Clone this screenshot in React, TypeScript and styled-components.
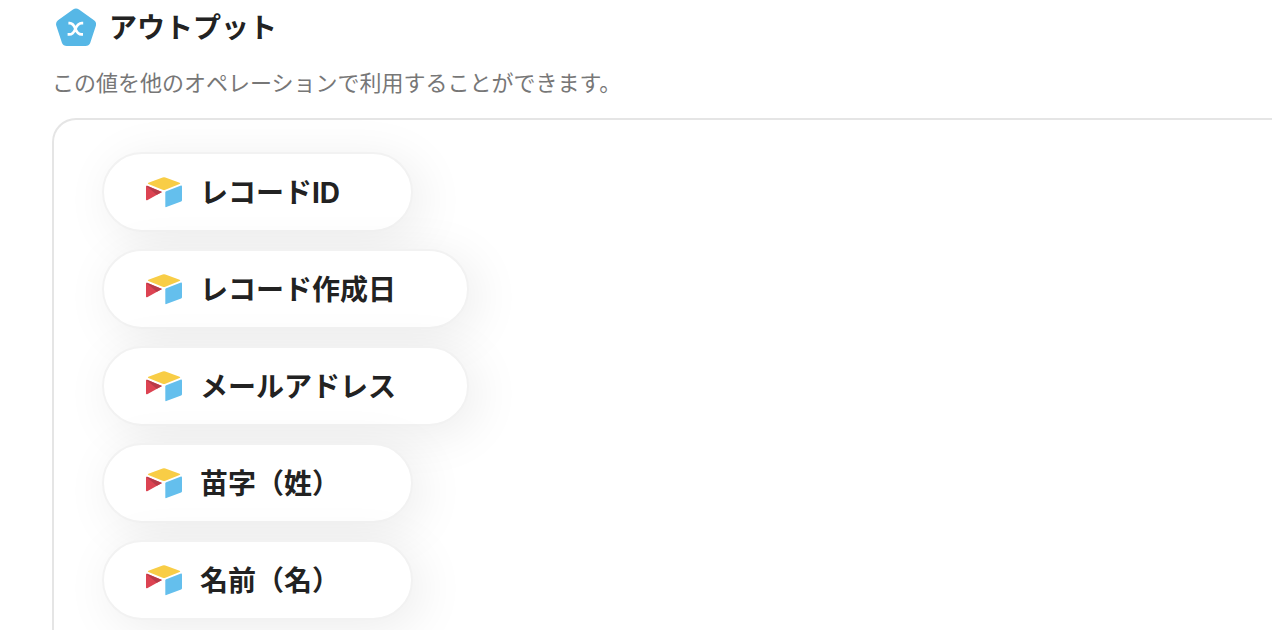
import React from "react";
import styled, { createGlobalStyle } from "styled-components";

const GlobalStyle = createGlobalStyle`
  *, *::before, *::after {
    box-sizing: border-box;
  }
  body {
    margin: 0;
    background: #ffffff;
    color: #222222;
    font-family: Inter, "Noto Sans CJK JP", sans-serif;
  }
`;

const Page = styled.main`
  display: flex;
  flex-direction: column;
  min-height: 100vh;
  padding-left: 52px;
  overflow: hidden;
`;

const Header = styled.header`
  display: flex;
  align-items: center;
  gap: 13px;
  height: 52px;
  padding: 2px 0 0 4px;
`;

const Title = styled.h1`
  margin: 0;
  padding-top: 2px;
  font-size: 28px;
  line-height: 40px;
  font-weight: 700;
`;

const Description = styled.p`
  margin: 15px 0 19px;
  font-size: 22px;
  line-height: 32px;
  color: #777777;
`;

const Panel = styled.section`
  flex: 1;
  padding: 32px 48px 12px;
  border: 2px solid #e5e5e5;
  border-width: 2px 0 0 2px;
  border-top-left-radius: 24px;
`;

const OutputList = styled.ul`
  display: flex;
  flex-direction: column;
  align-items: flex-start;
  gap: 17px;
  margin: 0;
  padding: 0;
  list-style: none;
`;

const Pill = styled.li`
  display: flex;
  align-items: center;
  gap: 16px;
  height: 80px;
  padding: 0 71px 0 40px;
  border: 2px solid #f2f2f2;
  border-radius: 40px;
  background: #ffffff;
  box-shadow: 8px 8px 50px rgba(0, 0, 0, 0.08);
`;

const PillLabel = styled.span`
  padding-top: 2px;
  font-size: 28px;
  line-height: 40px;
  font-weight: 700;
`;

const OutputIcon = () => (
  <svg width="40" height="40" viewBox="0 -1 40 40" aria-hidden="true">
    <path
      d="M17 1.6 Q20 -.6 23 1.6 L38 12.2 Q41 14.4 39.8 18 L34.2 35 Q33 38 29.4 38 H10.8 Q7.2 38 6 35 L.4 18 Q-.8 14.4 2 12.2 Z"
      fill="#56b7e6"
    />
    <path
      d="M12.4 15.2 H13.6 C20.8 15.2 17.8 26.4 25.6 26.4 H27 M27.2 15.2 H25.8 C18 15.2 20.8 26.4 13.4 26.4 H11.6"
      fill="none"
      stroke="#ffffff"
      strokeWidth="2.7"
    />
  </svg>
);

const TableIcon = () => (
  <svg width="40" height="32" viewBox="-1 -.6 40 32" aria-hidden="true">
    <path
      d="M17.6 .8 Q19 .3 20.4 .8 L34.6 6.2 Q36 6.9 34.6 7.5 L20.4 13.2 Q19 13.7 17.6 13.2 L3.4 7.5 Q2.2 6.9 3.4 6.2 Z"
      fill="#f8cd46"
    />
    <path
      d="M20.3 15.9 Q20.3 15 21.2 14.6 L36 9 Q37 8.8 37 9.8 V23.6 Q37 24.5 36.1 24.9 L21.3 30.5 Q20.3 30.8 20.3 29.8 Z"
      fill="#64bfed"
    />
    <path d="M1 10 Q1 8.8 2.1 9.2 L17 15.4 L2.2 23.6 Q1 24.1 1 23 Z" fill="#dc4352" />
    <path d="M1.4 9.3 L2.1 9.2 L17 15.4 L11.8 18.2 Z" fill="#b83a48" />
  </svg>
);

const outputs = [
  "レコードID",
  "レコード作成日",
  "メールアドレス",
  "苗字（姓）",
  "名前（名）",
];

export default function App() {
  return (
    <>
      <GlobalStyle />
      <Page>
        <Header>
          <OutputIcon />
          <Title>アウトプット</Title>
        </Header>
        <Description>
          この値を他のオペレーションで利用することができます。
        </Description>
        <Panel aria-label="アウトプット">
          <OutputList>
            {outputs.map((label) => (
              <Pill key={label}>
                <TableIcon />
                <PillLabel>{label}</PillLabel>
              </Pill>
            ))}
          </OutputList>
        </Panel>
      </Page>
    </>
  );
}
